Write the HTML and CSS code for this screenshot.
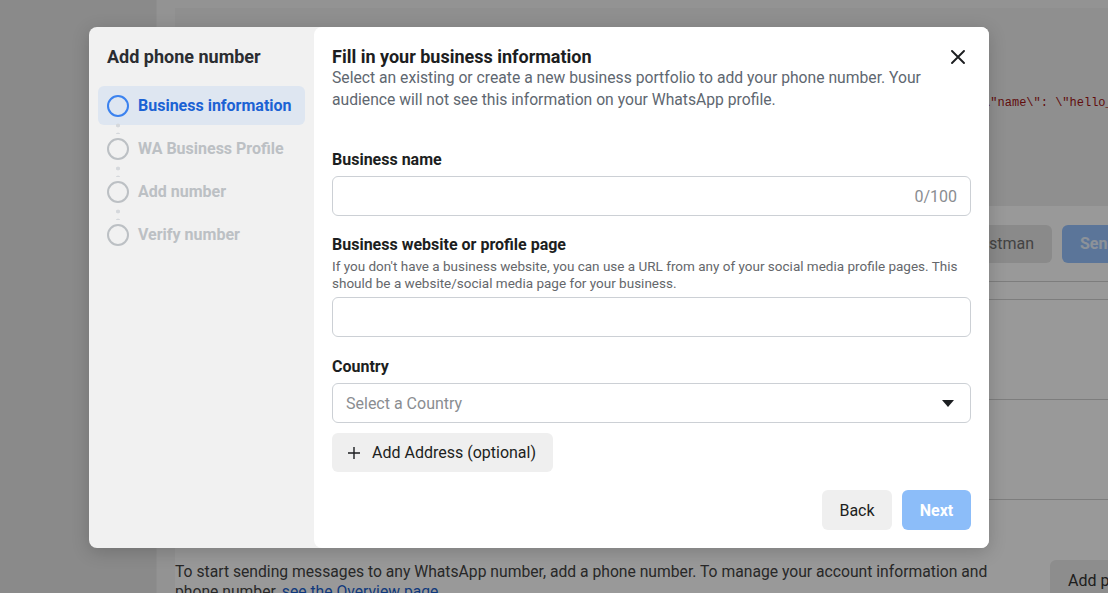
FILE: index.html
```html
<!DOCTYPE html>
<html lang="en">
<head>
<meta charset="utf-8">
<title>Add phone number</title>
<link rel="stylesheet" href="styles.css">
</head>
<body>
<div class="page">
  <aside class="side"></aside>
  <main class="main">
    <div class="content">
      <div class="code">
        <div class="code-line">          <span class="c-g">-d</span> <span class="c-r">'{</span>         <span class="c-k">\</span></div>
        <div class="code-line">  -H 'Authorization: Bearer token' \</div>
        <div class="code-line">  -H 'Content-Type: application/json' \</div>
        <div class="code-line c-str">             -d '{ \"messaging_product\": \"whatsapp\", \"to\": \"\", \"type\": \"template\", \"template\": { \"name\": \"hello_world\", \"language\": { \"code\": \"en_US\" } } }'</div>
      </div>
      <div class="toolbar">
        <button class="tb-btn tb-gray">Open in Postman</button>
        <button class="tb-btn tb-blue">Send message</button>
      </div>
      <div class="rows">
        <div class="row row-head"></div>
        <div class="row row-tall"></div>
        <div class="row row-tall"></div>
      </div>
      <div class="bottom">
        <p class="bottom-text">To start sending messages to any WhatsApp number, add a phone number. To manage your account information and phone number, <a class="bottom-link">see the Overview page</a>.</p>
        <button class="add-phone">Add phone number</button>
      </div>
    </div>
  </main>
</div>

<div class="overlay"></div>

<div class="modal" role="dialog">
  <section class="steps-panel">
    <h2 class="panel-title">Add phone number</h2>
    <ol class="steps">
      <li class="step active"><span class="circle"></span>Business information</li>
      <li class="step"><span class="circle"></span>WA Business Profile</li>
      <li class="step"><span class="circle"></span>Add number</li>
      <li class="step"><span class="circle"></span>Verify number</li>
    </ol>
  </section>

  <section class="form-panel">
    <header class="form-header">
      <div class="header-text">
        <h1 class="form-title">Fill in your business information</h1>
        <p class="form-sub">Select an existing or create a new business portfolio to add your phone number. Your audience will not see this information on your WhatsApp profile.</p>
      </div>
      <button class="close" aria-label="Close">
        <svg width="14" height="14" viewBox="0 0 14 14"><path d="M1 1L13 13M13 1L1 13" stroke="#1c1e21" stroke-width="1.9" stroke-linecap="round"/></svg>
      </button>
    </header>

    <div class="field first">
      <label class="label">Business name</label>
      <div class="input"><span class="counter">0/100</span></div>
    </div>

    <div class="field">
      <label class="label">Business website or profile page</label>
      <p class="help">If you don't have a business website, you can use a URL from any of your social media profile pages. This should be a website/social media page for your business.</p>
      <div class="input"></div>
    </div>

    <div class="field country">
      <label class="label">Country</label>
      <div class="input select">
        <span class="placeholder">Select a Country</span>
        <svg width="12" height="7" viewBox="0 0 12 7"><path d="M0 0H12L6 7Z" fill="#1c1e21"/></svg>
      </div>
    </div>

    <button class="add-address">
      <svg width="12" height="12" viewBox="0 0 12 12"><path d="M6 0V12M0 6H12" stroke="#1c1e21" stroke-width="1.4"/></svg>
      Add Address (optional)
    </button>

    <footer class="footer">
      <button class="btn btn-back">Back</button>
      <button class="btn btn-next">Next</button>
    </footer>
  </section>
</div>
</body>
</html>
```

FILE: styles.css
```css
* { box-sizing: border-box; }
html, body { margin: 0; padding: 0; }
body {
  width: 1108px;
  height: 593px;
  overflow: hidden;
  position: relative;
  font-family: Roboto, "Liberation Sans", Arial, sans-serif;
  background: #f5f5f5;
  color: #1c1e21;
}
button { font-family: inherit; border: 0; cursor: pointer; }
h1, h2, p, ol { margin: 0; padding: 0; }
ol { list-style: none; }

/* ---------- background page ---------- */
.page { display: flex; height: 593px; }
.side { width: 157px; flex: none; background: #e6e6e6; border-right: 1px solid #ededed; }
.main { flex: 1; padding: 8px 0 0 18px; overflow: hidden; }
.content { width: 1000px; background: #fff; }
.code {
  height: 198px;
  background: #eeeeee;
  padding: 17px 16px 0;
  font: 12px/18px "Liberation Mono", "DejaVu Sans Mono", monospace;
  color: #333;
  overflow: hidden;
}
.code-line { white-space: pre; height: 18px; }
.code-line + .code-line { margin-top: 5px; }
.c-g { color: #0b7a5a; }
.c-r { color: #c41a16; }
.c-k { color: #222; }
.c-str { color: #a31515; }
.toolbar {
  height: 76px;
  display: flex;
  justify-content: flex-end;
  align-items: center;
  gap: 10px;
  padding-right: 13px;
  border-bottom: 1px solid #d0d0d0;
}
.tb-btn { height: 38px; border-radius: 6px; font-size: 16px; padding: 0 18px; white-space: nowrap; }
.tb-gray { background: #e6e6e6; color: #707070; }
.tb-blue { background: #98c4ff; color: #eaf3ff; font-weight: 700; width: 100px; text-align: left; }
.row { border-bottom: 1px solid #d0d0d0; }
.row-head { height: 18px; }
.row-tall { height: 100px; }
.bottom { display: flex; align-items: flex-start; gap: 35px; padding-top: 62px; }
.bottom-text { width: 840px; flex: none; font-size: 15.7px; line-height: 20px; color: #444; }
.bottom-link { color: #1a5fd0; }
.add-phone { height: 40px; margin-top: -2px; border-radius: 6px; background: #ebebeb; color: #333; font-size: 16px; padding: 0 18px; white-space: nowrap; }

.overlay { position: absolute; inset: 0; background: rgba(0, 0, 0, 0.4); }

/* ---------- modal ---------- */
.modal {
  position: absolute;
  left: 89px;
  top: 27px;
  width: 900px;
  height: 521px;
  display: flex;
  background: #f1f1f1;
  border-radius: 8px;
  box-shadow: 0 4px 18px rgba(0, 0, 0, 0.18);
}
.steps-panel { width: 225px; flex: none; padding: 19px 9px; }
.panel-title { margin: 0 0 19px 9px; font-size: 18px; line-height: 21px; font-weight: 700; color: #2b2d31; }
.step {
  position: relative;
  height: 39px;
  margin-bottom: 4px;
  display: flex;
  align-items: center;
  gap: 9px;
  padding-left: 9px;
  border-radius: 6px;
  font-size: 16px;
  font-weight: 700;
  color: #bcc0c4;
}
.step.active { background: #dee6f1; color: #1b62d4; }
.circle { width: 22px; height: 22px; flex: none; border-radius: 50%; border: 2px solid #bcc0c4; }
.step.active .circle { border-color: #3b82ef; }
.step:not(:last-child)::after {
  content: "";
  position: absolute;
  left: 18px;
  top: 35px;
  width: 4px;
  height: 13px;
  background: radial-gradient(circle, #d5d8dc 1.7px, transparent 2.2px) 0 0 / 4px 9px repeat-y;
}

.form-panel {
  flex: 1;
  background: #fff;
  border-radius: 8px;
  padding: 19px 18px 18px;
  display: flex;
  flex-direction: column;
}
.form-header { display: flex; justify-content: space-between; align-items: flex-start; margin-bottom: 38px; }
.header-text { width: 600px; }
.form-title { font-size: 18px; line-height: 21px; font-weight: 700; color: #1c1e21; }
.form-sub { font-size: 15.7px; line-height: 22px; color: #606770; }
.close { width: 24px; height: 24px; margin-top: -1px; margin-right: 1px; background: transparent; display: flex; align-items: center; justify-content: center; padding: 0; }

.field { margin-top: 18px; }
.field.first { margin-top: 0; }
.field.country { margin-top: 19px; }
.label { display: block; font-size: 16px; line-height: 20px; font-weight: 700; color: #1c1e21; padding-top: 1px; height: 21px; margin-bottom: 6px; }
.help { font-size: 13.5px; line-height: 17px; color: #65676b; margin: -3px 0 5px; }
.input {
  height: 40px;
  border: 1px solid #ccd0d5;
  border-radius: 6px;
  display: flex;
  align-items: center;
  justify-content: flex-end;
  padding: 0 13px;
}
.counter { font-size: 16px; color: #8a8d91; }
.select { justify-content: space-between; padding: 0 16px 0 13px; }
.placeholder { font-size: 16px; color: #8a8d91; }

.add-address {
  align-self: flex-start;
  margin-top: 10px;
  height: 40px;
  display: flex;
  align-items: center;
  gap: 12px;
  padding: 0 17px 0 16px;
  border-radius: 6px;
  background: #efefef;
  font-size: 16px;
  color: #1c1e21;
}
.footer { margin-top: 18px; display: flex; justify-content: flex-end; gap: 10px; }
.btn { height: 40px; border-radius: 6px; font-size: 16px; }
.btn-back { width: 70px; background: #efefef; color: #1c1e21; }
.btn-next { width: 69px; background: #8cbdf9; color: #fff; font-weight: 700; }
```
